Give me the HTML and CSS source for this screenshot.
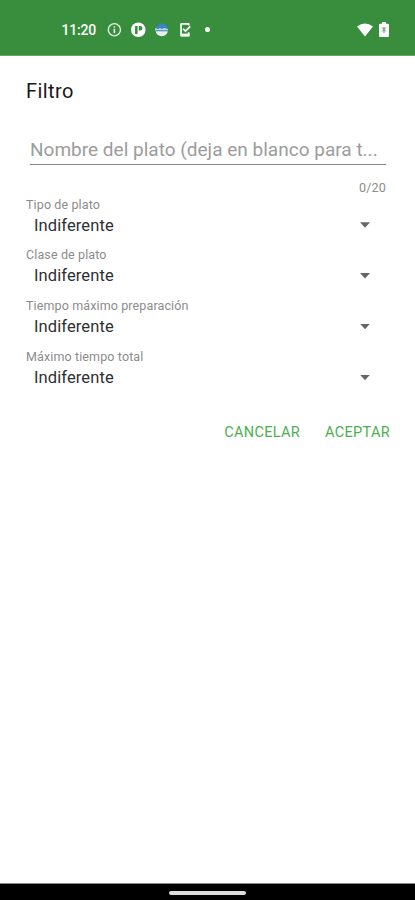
FILE: index.html
```html
<!DOCTYPE html>
<html lang="es">
<head>
<meta charset="utf-8">
<meta name="viewport" content="width=device-width, initial-scale=1">
<title>Filtro</title>
<link rel="stylesheet" href="styles.css">
</head>
<body>
<div class="screen">
  <header class="status">
    <span class="clock">11:20</span>
    <div class="notifications">
      <svg class="icon" viewBox="0 0 16 16"><circle cx="7.6" cy="8" r="6.3" fill="none" stroke="#e5f2e5" stroke-width="1.4"/><path d="M7.6 4.3v1.5M7.6 7v4.5" stroke="#e5f2e5" stroke-width="1.7"/></svg>
      <svg class="icon" viewBox="0 0 16 16"><circle cx="7.5" cy="8" r="7.5" fill="#fff"/><path d="M4.2 4h2.6v8.5H4.2zM8 4h1.4a2.4 2.4 0 0 1 0 4.8H8z" fill="#388e3c"/></svg>
      <svg class="icon" viewBox="0 0 16 16"><path d="M2 6.7a6 5.2 0 0 1 12 0z" fill="#3d83c9"/><path d="M1.2 6.3l3 1 2-1 2 1 2-1 4.2 1v2H1.2z" fill="#b9d7ee"/><path d="M1.6 8.4h12.8v1.2H1.6z" fill="#448bc8"/><path d="M1.8 9.6h12.4a6.2 5 0 0 1-12.4 0z" fill="#e4f0ed"/></svg>
      <svg class="icon" viewBox="0 0 16 16"><path d="M11 3.6V2H3.2v12H11v-3.4" fill="none" stroke="#fff" stroke-width="1.8" stroke-linejoin="round"/><path d="M5.2 7l2.5 2.5 5-5" fill="none" stroke="#fff" stroke-width="1.7"/><path d="M3 12h8.8v2.7H3z" fill="#fff"/></svg>
      <span class="dot"></span>
    </div>
    <div class="system">
      <svg class="wifi" viewBox="0 0 16 14"><path d="M0 3.5Q8-2.5 16 3.5L8 13.5z" fill="#fff"/></svg>
      <svg class="battery" viewBox="0 0 10 15"><path d="M3 0h4v1.7h2q1 0 1 1V14q0 1-1 1H1q-1 0-1-1V2.7q0-1 1-1h2z" fill="#fff"/><path d="M3.2 5.5l3.6 4M6.8 5.5l-3.6 4M5 5v6" stroke="#6b9b6d"/></svg>
    </div>
  </header>
  <main class="dialog">
    <h1 class="title">Filtro</h1>
    <div class="name-field">Nombre del plato (deja en blanco para t...</div>
    <div class="counter">0/20</div>
    <div class="filters">
      <div class="filter"><span class="label">Tipo de plato</span><div class="select"><span>Indiferente</span><i class="arrow"></i></div></div>
      <div class="filter"><span class="label">Clase de plato</span><div class="select"><span>Indiferente</span><i class="arrow"></i></div></div>
      <div class="filter"><span class="label">Tiempo máximo preparación</span><div class="select"><span>Indiferente</span><i class="arrow"></i></div></div>
      <div class="filter"><span class="label">Máximo tiempo total</span><div class="select"><span>Indiferente</span><i class="arrow"></i></div></div>
    </div>
    <div class="actions"><button>CANCELAR</button><button>ACEPTAR</button></div>
  </main>
  <footer class="navigation"><span class="handle"></span></footer>
</div>
</body>
</html>
```
FILE: styles.css
```css
* { box-sizing: border-box; }
body { margin: 0; background: #fff; font-family: Roboto, sans-serif; }
.screen { width: 415px; height: 900px; display: flex; flex-direction: column; overflow: hidden; }
.status { height: 56px; flex: none; background: #388e3c; border-bottom: 1px solid #65a768; display: flex; align-items: center; padding: 4px 26px 0 61.5px; color: #fff; }
.clock { width: 45.5px; font-size: 14px; font-weight: 500; letter-spacing: -.2px; }
.notifications { display: flex; align-items: center; gap: 8px; }
.icon { width: 15.5px; height: 15.5px; display: block; }
.dot { width: 5px; height: 5px; border-radius: 50%; background: #fff; margin-left: 4px; }
.system { margin-left: auto; display: flex; align-items: center; gap: 6px; }
.wifi { width: 16px; height: 14px; }
.battery { width: 10px; height: 15px; }
.dialog { flex: 1; padding: 21px 25px 0 26px; }
.title { margin: 0; height: 28px; line-height: 28px; font-size: 20px; font-weight: 450; letter-spacing: .4px; color: #181818; }
.name-field { margin: 29px 4px 0; height: 31px; border-bottom: 1px solid #888; line-height: 31px; font-size: 19px; color: #9c9c9c; letter-spacing: .01px; white-space: nowrap; }
.counter { text-align: right; padding-right: 4px; margin-top: 13.5px; height: 17px; line-height: 17px; font-size: 12.5px; color: #8c8c8c; letter-spacing: .2px; }
.filters { display: flex; flex-direction: column; }
.filter { height: 50.8px; }
.label { display: block; height: 17px; line-height: 17px; font-size: 12.5px; color: #8c8c8c; letter-spacing: .12px; }
.select { height: 25px; padding: 0 20px 0 8px; display: flex; align-items: center; justify-content: space-between; font-size: 16.5px; color: #303030; letter-spacing: .1px; }
.arrow { width: 10px; height: 5.5px; background: #666; clip-path: polygon(0 0, 100% 0, 50% 100%); }
.actions { display: flex; justify-content: flex-end; gap: 25px; margin-top: 20.3px; }
button { border: 0; padding: 0; background: none; height: 28px; font: 400 14.5px/28px Roboto, sans-serif; letter-spacing: .32px; color: #4caf50; }
.navigation { height: 17px; flex: none; background: #000; border-top: 1px solid #888; display: flex; justify-content: center; padding-top: 7px; }
.handle { width: 77px; height: 4px; border-radius: 2px; background: #ddd; }
```
